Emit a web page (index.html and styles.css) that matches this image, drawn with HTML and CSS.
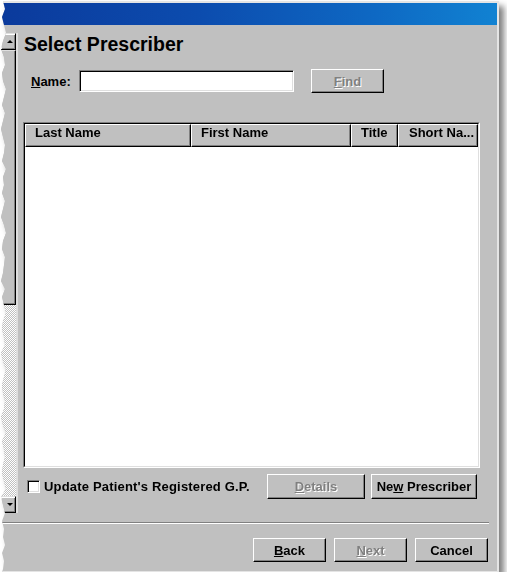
FILE: index.html
```html
<!DOCTYPE html>
<html>
<head>
<meta charset="utf-8">
<link rel="stylesheet" href="styles.css">
</head>
<body>
<div class="frame">
  <div class="window">
    <div class="titlebar"></div>
    <div class="main">
      <div class="vscroll">
        <div class="sb-btn"><span class="arr-up"></span></div>
        <div class="sb-thumb"></div>
        <div class="sb-track"></div>
        <div class="sb-btn"><span class="arr-down"></span></div>
      </div>
      <div class="content">
        <h1 class="heading">Select Prescriber</h1>
        <div class="name-row">
          <span class="lbl"><u>N</u>ame:</span>
          <div class="textbox"></div>
          <div class="btn btn-find disabled"><span><u>F</u>ind</span></div>
        </div>
        <div class="listview">
          <div class="lv-inner">
            <div class="lv-header">
              <div class="lv-col col-last">Last Name</div>
              <div class="lv-col col-first">First Name</div>
              <div class="lv-col col-title">Title</div>
              <div class="lv-col col-short">Short Na...</div>
            </div>
            <div class="lv-body"></div>
          </div>
        </div>
        <div class="action-row">
          <div class="check"><span class="checkbox"></span><span class="check-text">Update Patient's Registered G.P.</span></div>
          <div class="btn btn-details disabled"><span><u>D</u>etails</span></div>
          <div class="btn btn-new"><span>Ne<u>w</u> Prescriber</span></div>
        </div>
      </div>
    </div>
    <div class="separator"></div>
    <div class="footer">
      <div class="btn btn-nav"><span><u>B</u>ack</span></div>
      <div class="btn btn-nav disabled"><span><u>N</u>ext</span></div>
      <div class="btn btn-nav"><span>Cancel</span></div>
    </div>
  </div>
</div>
</body>
</html>
```

FILE: styles.css
```css
* { box-sizing: border-box; }

html, body {
  margin: 0;
  padding: 0;
  background: #ffffff;
}

body {
  padding-top: 1px;
  font-family: "Liberation Sans", Arial, sans-serif;
  font-size: 13px;
  font-weight: bold;
  color: #000;
}

.frame {
  width: 507px;
  filter: drop-shadow(5px 5px 3px rgba(0, 0, 0, 0.5));
}

.window {
  width: 499px;
  background: #c0c0c0;
  border-top: 2px solid #e4e4e4;
  border-right: 2px solid #e4e4e4;
  border-bottom: 1px solid #e4e4e4;
  display: flex;
  flex-direction: column;
  clip-path: polygon(3px 0, 5px 8px, 2px 16px, 4px 24px, 6px 32px, 3px 40px, 1px 48px, 4px 56px, 5px 64px, 2px 72px, 3px 80px, 6px 88px, 4px 96px, 2px 104px, 5px 112px, 3px 120px, 1px 128px, 3px 136px, 5px 144px, 4px 152px, 2px 160px, 6px 168px, 3px 176px, 4px 184px, 2px 192px, 5px 200px, 3px 208px, 1px 216px, 4px 224px, 6px 232px, 3px 240px, 2px 248px, 5px 256px, 4px 264px, 3px 272px, 1px 280px, 5px 288px, 2px 296px, 4px 304px, 6px 312px, 3px 320px, 2px 328px, 4px 336px, 5px 344px, 1px 352px, 3px 360px, 6px 368px, 4px 376px, 2px 384px, 3px 392px, 5px 400px, 4px 408px, 1px 416px, 3px 424px, 6px 432px, 2px 440px, 4px 448px, 5px 456px, 3px 464px, 2px 472px, 4px 480px, 6px 488px, 1px 496px, 3px 504px, 5px 512px, 2px 520px, 4px 528px, 3px 536px, 5px 544px, 2px 552px, 4px 560px, 3px 568px, 2px 100%, 100% 100%, 100% 0);
}

.titlebar {
  height: 22px;
  background: linear-gradient(90deg, #0b3a9c 0%, #0c4cae 40%, #0e68c3 75%, #1182d2 100%);
}

.main {
  height: 490px;
  display: flex;
}

/* vertical scrollbar */
.vscroll {
  margin-top: 8px;
  height: 480px;
  width: 18px;
  border-right: 2px solid #dedede;
  display: flex;
  flex-direction: column;
}

.sb-btn {
  height: 17px;
  background: #c0c0c0;
  border-top: 1px solid #dfdfdf;
  border-left: 1px solid #dfdfdf;
  border-right: 1px solid #000;
  border-bottom: 1px solid #000;
  box-shadow: inset 1px 1px #fff, inset -1px -1px #808080;
  display: flex;
  align-items: center;
  justify-content: center;
}

.arr-up {
  width: 0;
  height: 0;
  border-left: 3px solid transparent;
  border-right: 3px solid transparent;
  border-bottom: 3px solid #000;
  margin-left: 3px;
}

.arr-down {
  width: 0;
  height: 0;
  border-left: 3px solid transparent;
  border-right: 3px solid transparent;
  border-top: 3px solid #000;
  margin-left: 3px;
}

.sb-thumb {
  height: 255px;
  background: #c0c0c0;
  border-top: 1px solid #dfdfdf;
  border-right: 1px solid #000;
  border-bottom: 1px solid #000;
  box-shadow: inset -1px -1px #808080;
}

.sb-track {
  flex: 1;
  background: repeating-conic-gradient(#ffffff 0 25%, #c0c0c0 0 50%) 0 0 / 2px 2px;
}

/* content */
.content {
  flex: 1;
  padding: 8px 17px 0 5px;
  display: flex;
  flex-direction: column;
}

.heading {
  margin: 1px 0 0 1px;
  font-size: 19.5px;
  line-height: 20px;
  font-weight: bold;
}

.name-row {
  margin-top: 15px;
  height: 24px;
  padding-left: 8px;
  display: flex;
  align-items: center;
}

.lbl {
  width: 48px;
}

.textbox {
  width: 215px;
  height: 22px;
  background: #fff;
  border-top: 1px solid #808080;
  border-left: 1px solid #808080;
  border-right: 1px solid #fff;
  border-bottom: 1px solid #fff;
  box-shadow: inset 1px 1px #000, inset -1px -1px #dfdfdf;
}

.btn {
  height: 24px;
  background: #c0c0c0;
  border-top: 1px solid #fff;
  border-left: 1px solid #fff;
  border-right: 1px solid #000;
  border-bottom: 1px solid #000;
  box-shadow: inset -1px -1px #808080;
  display: flex;
  align-items: center;
  justify-content: center;
  font-size: 13px;
  font-weight: bold;
  color: #000;
  white-space: nowrap;
}

.btn.disabled {
  color: #808080;
  text-shadow: 1px 1px 0 #fff;
}

.btn-find {
  width: 73px;
  margin-left: 17px;
}

/* list view */
.listview {
  margin-top: 29px;
  height: 346px;
  border-top: 1px solid #808080;
  border-left: 1px solid #808080;
  border-right: 1px solid #fff;
  border-bottom: 1px solid #fff;
}

.lv-inner {
  height: 100%;
  border-top: 1px solid #000;
  border-left: 1px solid #000;
  border-right: 1px solid #dfdfdf;
  border-bottom: 1px solid #dfdfdf;
  display: flex;
  flex-direction: column;
}

.lv-header {
  display: flex;
  height: 23px;
  background: #c0c0c0;
}

.lv-col {
  height: 23px;
  padding-left: 9px;
  line-height: 16px;
  border-top: 1px solid #fff;
  border-left: 1px solid #fff;
  border-right: 1px solid #000;
  border-bottom: 1px solid #000;
  box-shadow: inset -1px -1px #808080;
  white-space: nowrap;
  overflow: hidden;
}

.col-last { width: 166px; }
.col-first { width: 160px; }
.col-title { width: 47px; }
.col-short { width: 80px; padding-left: 10px; }

.lv-body {
  flex: 1;
  background: #fff;
}

/* action row */
.action-row {
  margin-top: 6px;
  height: 25px;
  padding: 0 3px 0 4px;
  display: flex;
  align-items: center;
}

.check {
  flex: 1;
  display: flex;
  align-items: center;
}

.check-text {
  letter-spacing: 0.18px;
}

.checkbox {
  width: 13px;
  height: 13px;
  margin-right: 4px;
  background: #fff;
  border-top: 1px solid #808080;
  border-left: 1px solid #808080;
  border-right: 1px solid #fff;
  border-bottom: 1px solid #fff;
  box-shadow: inset 1px 1px #000, inset -1px -1px #dfdfdf;
}

.btn-details {
  width: 98px;
  height: 25px;
}

.btn-new {
  width: 106px;
  height: 25px;
  margin-left: 6px;
}

/* separator & footer */
.separator {
  margin: 7px 8px 0 0;
  height: 2px;
  border-top: 1px solid #808080;
  border-bottom: 1px solid #fff;
}

.footer {
  padding: 14px 9px 9px 0;
  display: flex;
  justify-content: flex-end;
  gap: 8px;
}

.btn-nav {
  width: 73px;
}
```
